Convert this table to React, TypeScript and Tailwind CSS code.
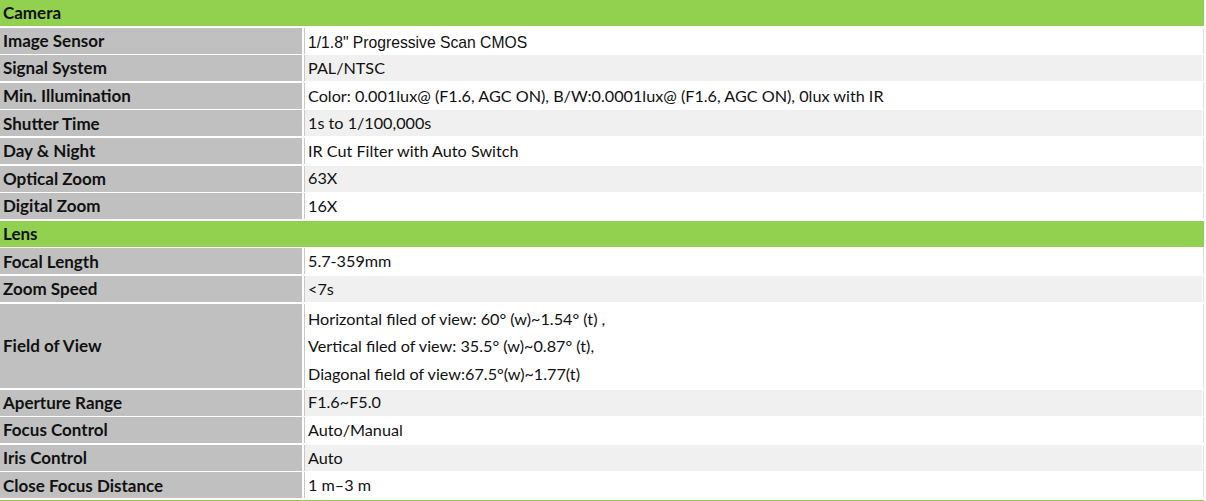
import React from "react";

type Row =
  | { kind: "section"; title: string }
  | { kind: "spec"; label: string; value: string[]; arial?: boolean };

const rows: Row[] = [
  { kind: "section", title: "Camera" },
  { kind: "spec", label: "Image Sensor", value: ['1/1.8" Progressive Scan CMOS'], arial: true },
  { kind: "spec", label: "Signal System", value: ["PAL/NTSC"] },
  { kind: "spec", label: "Min. Illumination", value: ["Color: 0.001lux@ (F1.6, AGC ON), B/W:0.0001lux@ (F1.6, AGC ON), 0lux with IR"] },
  { kind: "spec", label: "Shutter Time", value: ["1s to 1/100,000s"] },
  { kind: "spec", label: "Day & Night", value: ["IR Cut Filter with Auto Switch"] },
  { kind: "spec", label: "Optical Zoom", value: ["63X"] },
  { kind: "spec", label: "Digital Zoom", value: ["16X"] },
  { kind: "section", title: "Lens" },
  { kind: "spec", label: "Focal Length", value: ["5.7-359mm"] },
  { kind: "spec", label: "Zoom Speed", value: ["<7s"] },
  {
    kind: "spec",
    label: "Field of View",
    value: [
      "Horizontal filed of view: 60° (w)~1.54° (t) ,",
      "Vertical filed of view: 35.5° (w)~0.87° (t),",
      "Diagonal field of view:67.5°(w)~1.77(t)",
    ],
  },
  { kind: "spec", label: "Aperture Range", value: ["F1.6~F5.0"] },
  { kind: "spec", label: "Focus Control", value: ["Auto/Manual"] },
  { kind: "spec", label: "Iris Control", value: ["Auto"] },
  { kind: "spec", label: "Close Focus Distance", value: ["1 m–3 m"] },
];

export default function App() {
  let stripe = 0;
  return (
    <div className="min-h-screen bg-white text-[#111]" style={{ fontFamily: "Lato, 'Noto Sans', sans-serif" }}>
      <div className="flex flex-col gap-[1.6px] pr-[2px]">
        {rows.map((row, i) => {
          if (row.kind === "section") {
            stripe = 0;
            return (
              <div key={i} className="flex h-[26px] items-center bg-[#92d050] px-[3px] text-[17px] font-bold">
                {row.title}
              </div>
            );
          }
          const shaded = stripe++ % 2 === 1;
          const multi = row.value.length > 1;
          return (
            <div key={i} className="flex">
              <div className="flex w-[302px] shrink-0 items-center bg-[#c0c0c0] px-[3px] text-[17px] font-bold">
                {row.label}
              </div>
              <div className="ml-[2px] w-px bg-[#c8c8c8]" />
              <div
                className={`flex flex-1 flex-col justify-center px-[3px] text-[16.2px] ${shaded ? "bg-[#f0f0f0]" : "bg-white"} ${
                  multi ? "py-[1px]" : "h-[26px]"
                }`}
              >
                {row.value.map((v, j) => (
                  <div
                    key={j}
                    className={multi ? "leading-[27.5px]" : row.arial ? "pt-[5px] font-['Liberation_Sans',Arial,sans-serif] text-[15.7px]" : ""}
                  >
                    {v}
                  </div>
                ))}
              </div>
              <div className="ml-px w-px bg-[#e0e0e0]" />
            </div>
          );
        })}
        <div className="h-[3px] bg-[#92d050]" />
      </div>
    </div>
  );
}
